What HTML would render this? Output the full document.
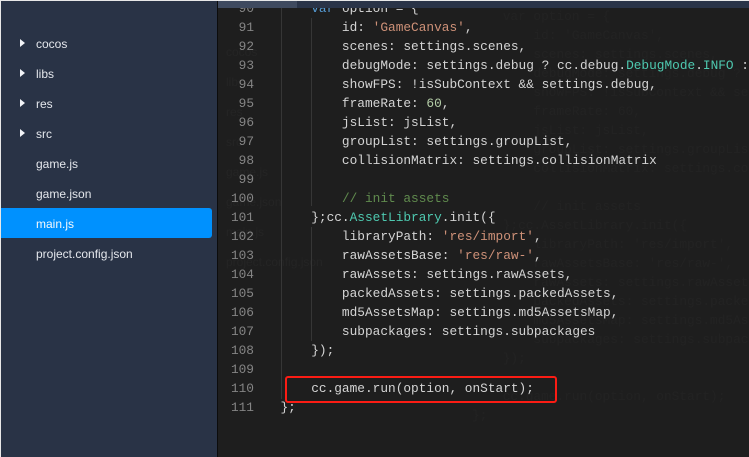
<!DOCTYPE html>
<html>
<head>
<meta charset="utf-8">
<style>
html,body{margin:0;padding:0;background:#1e1e1e}
#root{position:relative;width:749px;height:457px;overflow:hidden;background:#1e1e1e}
#edge{position:absolute;left:0;top:0;width:1px;height:457px;background:#e8e8e8;z-index:9}
#edgetop{position:absolute;left:0;top:0;width:749px;height:1px;background:#e8e8e8;z-index:9}
#side{position:absolute;left:1px;top:1px;width:216px;height:456px;background:#293346;z-index:5}
#divider{position:absolute;left:217px;top:0;width:1px;height:457px;background:#0c0c0c;z-index:6}
#bar{position:absolute;left:218px;top:1px;width:531px;height:7px;background:#2a3448;z-index:4}
#thumb{position:absolute;left:218px;top:1px;width:79px;height:7px;background:#3f4a5f;z-index:4}
.it{position:absolute;left:35px;height:30px;font:12px/30px "Liberation Sans",sans-serif;color:#e4e7ec;white-space:pre}
.tri{position:absolute;left:19px;width:0;height:0;border-left:5.5px solid #f2f4f7;border-top:4px solid transparent;border-bottom:4px solid transparent}
#sel{position:absolute;left:0;top:207px;width:211px;height:30px;background:#0091fe;border-radius:0 3px 3px 0}
pre{margin:0;position:absolute;font:12.8px/19.05px "Liberation Mono",monospace;color:#d4d4d4;white-space:pre}
#nums{left:219px;top:-1.5px;width:35px;text-align:right;color:#858585}
#code{left:280.5px;top:-1.5px}
.guide{position:absolute;width:1px;background:#363636}
.s{color:#ce9178}.n{color:#b5cea8}.t{color:#4ec9b0}.c{color:#608b4e}.k{color:#569cd6}
#ghost{position:absolute;left:0;top:0;width:749px;height:457px;opacity:.025}
#ghost .cd{left:472px;top:6.5px}
#ghost .it{color:#fff;left:226px}
#box{position:absolute;left:285px;top:376px;width:268px;height:23px;border:2.5px solid #fb1c14;border-radius:3px;z-index:3}
</style>
</head>
<body>
<div id="root">
<div id="edge"></div><div id="edgetop"></div>
<div id="side">
<div class="tri" style="top:38px"></div><div class="it" style="top:28px">cocos</div>
<div class="tri" style="top:68px"></div><div class="it" style="top:58px">libs</div>
<div class="tri" style="top:98px"></div><div class="it" style="top:88px">res</div>
<div class="tri" style="top:128px"></div><div class="it" style="top:118px">src</div>
<div class="it" style="top:148px">game.js</div>
<div class="it" style="top:178px">game.json</div>
<div id="sel"></div>
<div class="it" style="top:208px;color:#f4f8fc">main.js</div>
<div class="it" style="top:238px">project.config.json</div>
</div>
<div id="divider"></div>
<div id="bar"></div><div id="thumb"></div>

<div id="ghost">
<div class="it" style="top:37px">cocos</div>
<div class="it" style="top:67px">libs</div>
<div class="it" style="top:97px">res</div>
<div class="it" style="top:127px">src</div>
<div class="it" style="top:157px">game.js</div>
<div class="it" style="top:187px">game.json</div>
<div class="it" style="top:217px">main.js</div>
<div class="it" style="top:247px">project.config.json</div>
<pre class="cd">    var option = {
        id: 'GameCanvas',
        scenes: settings.scenes,
        debugMode: settings.debug ? cc.debug.DebugMode.INFO :
        showFPS: !isSubContext &amp;&amp; settings.debug,
        frameRate: 60,
        jsList: jsList,
        groupList: settings.groupList,
        collisionMatrix: settings.collisionMatrix

        // init assets
    };cc.AssetLibrary.init({
        libraryPath: 'res/import',
        rawAssetsBase: 'res/raw-',
        rawAssets: settings.rawAssets,
        packedAssets: settings.packedAssets,
        md5AssetsMap: settings.md5AssetsMap,
        subpackages: settings.subpackages
    });

    cc.game.run(option, onStart);
};</pre>
</div>

<div class="guide" style="left:281px;top:8px;height:391px"></div>
<div class="guide" style="left:311px;top:18px;height:188px"></div>
<div class="guide" style="left:311px;top:227px;height:114px"></div>

<pre id="nums">90
91
92
93
94
95
96
97
98
99
100
101
102
103
104
105
106
107
108
109
110
111</pre>
<pre id="code">    <span class="k">var</span> option = {
        id: <span class="s">'GameCanvas'</span>,
        scenes: settings.scenes,
        debugMode: settings.debug ? cc.debug.<span class="t">DebugMode</span>.<span class="t">INFO</span> :
        showFPS: !isSubContext &amp;&amp; settings.debug,
        frameRate: <span class="n">60</span>,
        jsList: jsList,
        groupList: settings.groupList,
        collisionMatrix: settings.collisionMatrix

        <span class="c">// init assets</span>
    };cc.<span class="t">AssetLibrary</span>.init({
        libraryPath: <span class="s">'res/import'</span>,
        rawAssetsBase: <span class="s">'res/raw-'</span>,
        rawAssets: settings.rawAssets,
        packedAssets: settings.packedAssets,
        md5AssetsMap: settings.md5AssetsMap,
        subpackages: settings.subpackages
    });

    cc.game.run(option, onStart);
};</pre>
<div id="box"></div>
</div>
</body>
</html>
